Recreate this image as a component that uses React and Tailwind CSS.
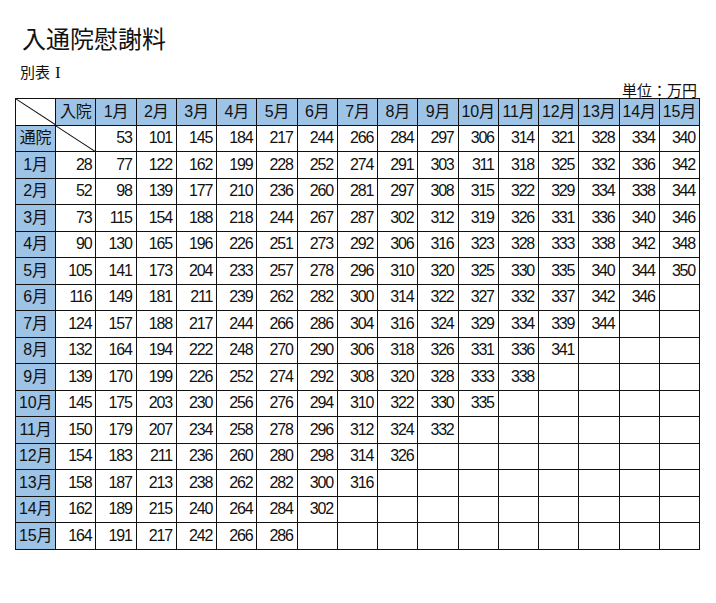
const months = Array.from({ length: 15 }, (_, i) => `${i + 1}月`);

const rows = [
  ["通院", [null, 53, 101, 145, 184, 217, 244, 266, 284, 297, 306, 314, 321, 328, 334, 340]],
  ["1月", [28, 77, 122, 162, 199, 228, 252, 274, 291, 303, 311, 318, 325, 332, 336, 342]],
  ["2月", [52, 98, 139, 177, 210, 236, 260, 281, 297, 308, 315, 322, 329, 334, 338, 344]],
  ["3月", [73, 115, 154, 188, 218, 244, 267, 287, 302, 312, 319, 326, 331, 336, 340, 346]],
  ["4月", [90, 130, 165, 196, 226, 251, 273, 292, 306, 316, 323, 328, 333, 338, 342, 348]],
  ["5月", [105, 141, 173, 204, 233, 257, 278, 296, 310, 320, 325, 330, 335, 340, 344, 350]],
  ["6月", [116, 149, 181, 211, 239, 262, 282, 300, 314, 322, 327, 332, 337, 342, 346]],
  ["7月", [124, 157, 188, 217, 244, 266, 286, 304, 316, 324, 329, 334, 339, 344]],
  ["8月", [132, 164, 194, 222, 248, 270, 290, 306, 318, 326, 331, 336, 341]],
  ["9月", [139, 170, 199, 226, 252, 274, 292, 308, 320, 328, 333, 338]],
  ["10月", [145, 175, 203, 230, 256, 276, 294, 310, 322, 330, 335]],
  ["11月", [150, 179, 207, 234, 258, 278, 296, 312, 324, 332]],
  ["12月", [154, 183, 211, 236, 260, 280, 298, 314, 326]],
  ["13月", [158, 187, 213, 238, 262, 282, 300, 316]],
  ["14月", [162, 189, 215, 240, 264, 284, 302]],
  ["15月", [164, 191, 217, 242, 266, 286]],
];

function Diagonal() {
  return (
    <svg className="absolute inset-0 h-full w-full" viewBox="0 0 100 100" preserveAspectRatio="none">
      <line x1="0" y1="0" x2="100" y2="100" stroke="#111" strokeWidth="1" vectorEffect="non-scaling-stroke" />
    </svg>
  );
}

const cell = "border border-[#111] h-[26.5px] p-0";
const head = `${cell} bg-[#9dc3e6] text-center text-[16px] tracking-[-0.2px]`;
const jp = { fontFamily: '"Noto Sans CJK JP", sans-serif' };

export default function App() {
  return (
    <div
      className="min-h-screen bg-white pl-[15px] pt-[24px] text-[#111]"
      style={{ fontFamily: '"Liberation Sans", "Noto Sans CJK JP", sans-serif' }}
    >
      <h1 className="pl-[7px] text-[24px] leading-[28px] font-normal" style={jp}>
        入通院慰謝料
      </h1>
      <p className="mt-[11px] flex items-baseline pl-[5px] text-[15px] leading-[18px]" style={jp}>
        別表
        <span className="ml-[5px] text-[17px]" style={{ fontFamily: '"Liberation Serif", serif' }}>
          I
        </span>
      </p>
      <div className="flex w-[685px] justify-end pr-[3px] text-[15px] leading-[16px]" style={jp}>
        単位：万円
      </div>
      <table className="w-[685px] table-fixed border-collapse text-[16px] leading-none tracking-[-1.2px]">
        <tbody>
          <tr>
            <td className={`${cell} relative`}>
              <Diagonal />
            </td>
            <td className={head}>入院</td>
            {months.map((m) => (
              <td key={m} className={head}>
                {m}
              </td>
            ))}
          </tr>
          {rows.map(([label, vals]) => (
            <tr key={label}>
              <td className={head}>{label}</td>
              {Array.from({ length: 16 }, (_, i) => {
                const v = vals[i];
                if (label === "通院" && i === 0) {
                  return (
                    <td key={i} className={`${cell} relative`}>
                      <Diagonal />
                    </td>
                  );
                }
                return (
                  <td key={i} className={`${cell} pr-[4px] text-right`}>
                    {v ?? ""}
                  </td>
                );
              })}
            </tr>
          ))}
        </tbody>
      </table>
    </div>
  );
}
